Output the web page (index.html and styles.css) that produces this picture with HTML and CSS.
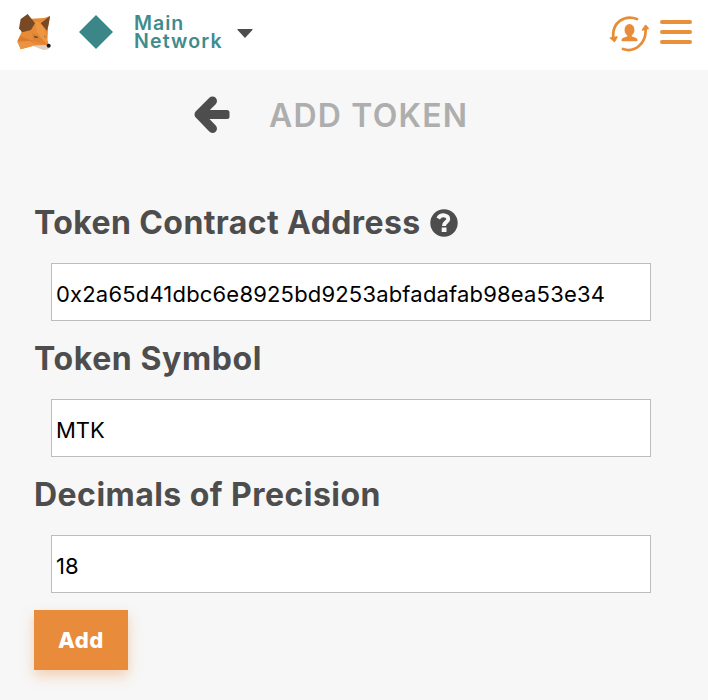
FILE: index.html
```html
<!DOCTYPE html>
<html lang="en">
<head>
<meta charset="utf-8">
<title>Add Token</title>
<link rel="stylesheet" href="styles.css">
</head>
<body>
<header class="app-header">
  <svg class="fox" width="36" height="38" viewBox="0 0 36 38">
    <path fill="#e88b36" d="M12 5 18 4.500 27 4 33 2 31 14 30.500 26 32 32 27 34 16 32 3.700 35.300.3 27.700 5 17Z"/>
    <path fill="#ee9743" d="M18 7 24 9 28 17 30 29 24 24 20 17Z"/>
    <path fill="#e18131" d="M15 19 21 21 30 31 16 27Z"/>
    <path fill="#db7b2e" d="M3 22 16 27 14 31 .5 27Z"/>
    <path fill="#ed9142" d="M1 27.500 14 27 17 31.500 3.700 35.300Z"/>
    <path fill="#774925" d="M10.700 0 18 9.300 14 16 5 18.300 2 14.300 3.700 5Z"/>
    <path fill="#774925" d="M33 2 23.700 9.300 30 16.700 31.700 10Z"/>
    <path fill="#dcd1c7" d="M15 31.500 29 31 32 34 31 35.500 26 36Z"/>
    <path fill="#344552" d="m17 21.700 4 1.300-.5 1-3-.5zM27.200 21.500l1 .4v1.800z"/>
    <circle cx="31.700" cy="31.800" r="2" fill="#17191b"/>
  </svg>
  <svg class="network-icon" width="34" height="34" viewBox="0 0 34 34"><path fill="#3b8788" d="M17 0 34 17 17 34 0 17Z"/></svg>
  <div class="network-name"><span class="main-word">Main</span><span class="network-word">Network</span></div>
  <svg class="caret" width="16" height="9" viewBox="0 0 16 9"><path fill="#4d4d4d" d="M1 0h14q1 0 .4.900L8 9 .6.900Q0 0 1 0Z"/></svg>
  <svg class="account-switch" width="40" height="38" viewBox="0 0 40 38">
    <g fill="none" stroke="#e88c38" stroke-width="2.700" stroke-linecap="round" stroke-linejoin="round">
      <path d="M28 4C16-.5 2 7 4.500 24"/>
      <path d="M14 34C25 38 38 29 36.500 13"/>
    </g>
    <g fill="#e88c38" stroke="#e88c38" stroke-width="1.500" stroke-linejoin="round">
      <path d="m1.500 23 6.500-1-2.500 4.500ZM33.500 15l3.200-4.500 2.500 3Z"/>
      <ellipse cx="20.500" cy="15" rx="4.200" ry="5.200"/>
      <path d="M19 19h3v3l4.500 1.500q1.500.8 1.300 2h-14.600q-.2-1.200 1.300-2l4.500-1.500Z"/>
    </g>
  </svg>
  <svg class="menu" width="32" height="24" viewBox="0 0 32 24"><path fill="none" stroke="#e99138" stroke-width="4" stroke-linecap="round" d="M2 2h28M2 12h28M2 22h28"/></svg>
</header>
<main>
  <div class="title-row">
    <svg width="36" height="38" viewBox="0 0 36 38"><path fill="none" stroke="#4d4d4d" stroke-width="9" stroke-linejoin="round" stroke-linecap="round" d="M18.500 5 5 18.500 18.500 32.500"/><path fill="#4d4d4d" d="M5 14h28q2.500 0 2.500 2.500v4q0 2.500-2.500 2.500H5Z"/></svg>
    <h1>ADD TOKEN</h1>
  </div>
  <form>
    <label for="address"><span class="label-address">Token Contract Address</span>
      <svg width="28" height="28" viewBox="0 0 28 28"><circle cx="14" cy="14" r="13.700" fill="#4d4d4d"/><path fill="none" stroke="#f7f7f7" stroke-width="4" d="M8.200 9.500C11 4.500 19 6 18.200 10.500 17.800 13 14 13 14 17"/><path fill="#f7f7f7" d="M11.700 18.500h4.800v4.500h-4.800z"/></svg>
    </label>
    <input id="address" class="value-address" type="text" spellcheck="false" value="0x2a65d41dbc6e8925bd9253abfadafab98ea53e34">
    <label for="symbol"><span class="label-symbol">Token Symbol</span></label>
    <input id="symbol" type="text" spellcheck="false" value="MTK">
    <label for="decimals"><span class="label-decimals">Decimals of Precision</span></label>
    <input id="decimals" type="text" value="18">
    <button type="button">Add</button>
  </form>
</main>
</body>
</html>
```

FILE: styles.css
```css
* { box-sizing: border-box; }
body {
  margin: 0;
  height: 700px;
  overflow: hidden;
  background: #f7f7f7;
  color: #4d4d4d;
  font-family: Inter, "Liberation Sans", sans-serif;
}
svg { display: block; flex: none; }
.app-header {
  height: 70px;
  padding: 13px 16px 0 17px;
  display: flex;
  align-items: flex-start;
  background: #fff;
}
.fox { margin-top: 1px; }
.network-icon { margin: 2px 0 0 26px; }
.network-name {
  width: 88px;
  margin: 1px 0 0 21px;
  display: flex;
  flex-direction: column;
  color: #3f8c8e;
  font-size: 19.500px;
  line-height: 18px;
  font-weight: 600;
  white-space: nowrap;
}
.main-word { letter-spacing: 1px; }
.network-word { letter-spacing: 1.150px; }
.caret { margin: 16px 0 0 15px; }
.account-switch { margin: 2px 1px 0 auto; }
.menu { margin: 7px 0 0 10px; }
.title-row {
  height: 89px;
  padding: 0 0 0 194px;
  display: flex;
  align-items: center;
}
.title-row h1 {
  margin: 2px 0 0 39px;
  color: #aeaeae;
  font-size: 32px;
  line-height: 40px;
  font-weight: 600;
  letter-spacing: 1.200px;
}
form { padding: 36px 57px 0 34px; }
label {
  height: 56px;
  display: flex;
  align-items: center;
  font-size: 32px;
  font-weight: 700;
  line-height: 40px;
  white-space: nowrap;
}
label svg { margin-left: 9px; }
.label-address { letter-spacing: .4px; }
.label-symbol { letter-spacing: .600px; }
.label-decimals { letter-spacing: .460px; }
input {
  display: block;
  width: 600px;
  height: 58px;
  margin: 12px 0 10px 17px;
  padding: 3px 4px 0;
  border: 1px solid #bdbdbd;
  border-radius: 0;
  background: #fff;
  color: #000;
  font: 400 22px/28px Inter, "Liberation Sans", sans-serif;
}
.value-address { letter-spacing: .180px; }
button {
  display: block;
  width: 94px;
  height: 60px;
  margin-top: 17px;
  padding: 0;
  border: 0;
  background: #e88b3a;
  box-shadow: 0 6px 12px rgba(232, 139, 58, .36);
  color: #fff;
  font: 800 22px/60px Inter, "Liberation Sans", sans-serif;
  letter-spacing: .500px;
}
```
